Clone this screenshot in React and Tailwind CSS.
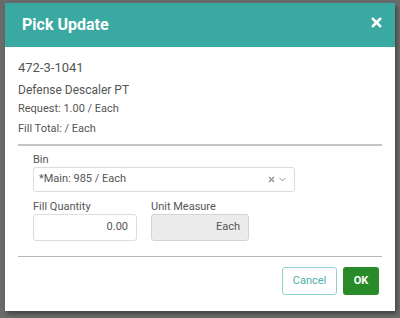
import { X, ChevronDown } from 'lucide-react';

const font = { fontFamily: 'Roboto, "Liberation Sans", sans-serif' };

export default function App() {
  return (
    <div className="w-[400px] h-[318px] bg-[#6a6a6a] pt-[3px] pl-[5px] overflow-hidden" style={font}>
      <div className="w-[390px] h-[308px] bg-white shadow-[2px_3px_4px_rgba(0,0,0,0.35)] flex flex-col">
        {/* header */}
        <div className="h-[44px] bg-[#3aa9a1] flex items-center justify-between pl-[17px] pr-[11px]">
          <h2 className="text-[16px] font-bold text-white">Pick Update</h2>
          <X className="w-[15px] h-[15px] text-white -mt-[6px]" strokeWidth={4} />
        </div>

        {/* body */}
        <div className="px-[13px] pt-[13px] text-[#555]">
          <div className="text-[13px] leading-[16px]">472-3-1041</div>
          <div className="text-[12px] leading-[15px] mt-[7px]">Defense Descaler PT</div>
          <div className="text-[11px] leading-[14px] mt-[4px]">Request: 1.00 / Each</div>
          <div className="text-[11px] leading-[14px] mt-[6px]">Fill Total: / Each</div>
          <div className="h-[2px] bg-[#c4c4c4] mt-[8px]" />

          <div className="pl-[15px] pt-[7px]">
            <label className="block text-[11px] leading-[14px]">Bin</label>
            <div className="mt-0 w-[262px] h-[25px] border border-[#dcdcdc] rounded-[3px] flex items-center justify-between pl-[5px] pr-[6px] text-[11px]">
              <span>*Main: 985 / Each</span>
              <span className="flex items-center gap-[1px] text-[#888]">
                <X className="w-[9px] h-[9px]" strokeWidth={3} />
                <ChevronDown className="w-[11px] h-[11px]" strokeWidth={2} />
              </span>
            </div>

            <div className="flex gap-[14px] mt-[8px]">
              <div>
                <label className="block text-[11px] leading-[14px]">Fill Quantity</label>
                <div className="mt-0 w-[104px] h-[27px] border border-[#dcdcdc] rounded-[3px] flex items-center justify-end pr-[8px] text-[11px]">
                  0.00
                </div>
              </div>
              <div>
                <label className="block text-[11px] leading-[14px]">Unit Measure</label>
                <div className="mt-0 w-[98px] h-[27px] border border-[#d4d4d4] bg-[#ececec] rounded-[3px] flex items-center justify-end pr-[8px] text-[11px]">
                  Each
                </div>
              </div>
            </div>
          </div>

          <div className="h-[1px] bg-[#b8b8b8] mt-[15px]" />

          <div className="flex justify-end gap-[6px] pt-[10px] pr-[3px]">
            <button className="w-[55px] h-[28px] border-[1.5px] border-[#8fd3cd] rounded-[3px] text-[11px] text-[#4fb2aa]">
              Cancel
            </button>
            <button className="w-[36px] h-[28px] bg-[#298a2a] rounded-[3px] text-[11px] font-bold text-white">
              OK
            </button>
          </div>
        </div>
      </div>
    </div>
  );
}
